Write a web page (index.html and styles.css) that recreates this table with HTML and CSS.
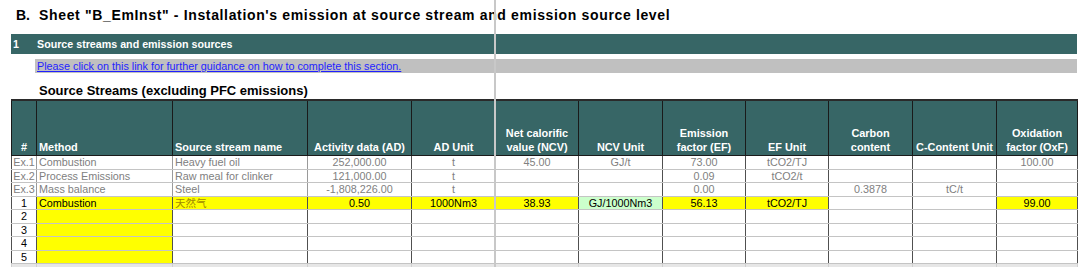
FILE: index.html
```html
<!DOCTYPE html>
<html>
<head>
<meta charset="utf-8">
<link rel="stylesheet" href="styles.css">
</head>
<body>
<div class="page">
  <h1 class="title"><span class="title-num">B.</span>Sheet "B_EmInst" - Installation's emission at source stream and emission source level</h1>
  <div class="section-bar"><span class="sec-num">1</span>Source streams and emission sources</div>
  <div class="guide-bar"><a class="guide-link" href="#">Please click on this link for further guidance on how to complete this section.</a></div>
  <h2 class="subtitle">Source Streams (excluding PFC emissions)</h2>
  <table class="grid">
    <colgroup>
      <col class="c-num"><col class="c-method"><col class="c-name"><col class="c-ad"><col class="c-w84"><col class="c-w83"><col class="c-w84"><col class="c-w83"><col class="c-w83"><col class="c-w84"><col class="c-w84"><col class="c-w81">
    </colgroup>
    <thead>
      <tr>
        <th class="ctr">#</th>
        <th class="lft">Method</th>
        <th class="lft">Source stream name</th>
        <th>Activity data (AD)</th>
        <th>AD Unit</th>
        <th>Net calorific<br>value (NCV)</th>
        <th>NCV Unit</th>
        <th>Emission<br>factor (EF)</th>
        <th>EF Unit</th>
        <th>Carbon<br>content</th>
        <th>C-Content Unit</th>
        <th>Oxidation<br>factor (OxF)</th>
      </tr>
    </thead>
    <tbody>
      <tr class="ex">
        <td class="idx">Ex.1</td><td class="lft">Combustion</td><td class="lft">Heavy fuel oil</td><td>252,000.00</td><td>t</td><td>45.00</td><td>GJ/t</td><td>73.00</td><td>tCO2/TJ</td><td></td><td></td><td>100.00</td>
      </tr>
      <tr class="ex">
        <td class="idx">Ex.2</td><td class="lft">Process Emissions</td><td class="lft">Raw meal for clinker</td><td>121,000.00</td><td>t</td><td></td><td></td><td>0.09</td><td>tCO2/t</td><td></td><td></td><td></td>
      </tr>
      <tr class="ex">
        <td class="idx">Ex.3</td><td class="lft">Mass balance</td><td class="lft">Steel</td><td>-1,808,226.00</td><td>t</td><td></td><td></td><td>0.00</td><td></td><td>0.3878</td><td>tC/t</td><td></td>
      </tr>
      <tr>
        <td class="idx">1</td><td class="lft yel">Combustion</td><td class="lft yel cjk">天然气</td><td class="yel">0.50</td><td class="yel">1000Nm3</td><td class="yel">38.93</td><td class="grn">GJ/1000Nm3</td><td class="yel">56.13</td><td class="yel">tCO2/TJ</td><td></td><td></td><td class="yel">99.00</td>
      </tr>
      <tr><td class="idx">2</td><td class="yel"></td><td></td><td></td><td></td><td></td><td></td><td></td><td></td><td></td><td></td><td></td></tr>
      <tr><td class="idx">3</td><td class="yel"></td><td></td><td></td><td></td><td></td><td></td><td></td><td></td><td></td><td></td><td></td></tr>
      <tr><td class="idx">4</td><td class="yel"></td><td></td><td></td><td></td><td></td><td></td><td></td><td></td><td></td><td></td><td></td></tr>
      <tr><td class="idx">5</td><td class="yel"></td><td></td><td></td><td></td><td></td><td></td><td></td><td></td><td></td><td></td><td></td></tr>
      <tr class="tail"><td></td><td></td><td></td><td></td><td></td><td></td><td></td><td></td><td></td><td></td><td></td><td></td></tr>
    </tbody>
  </table>
  <div class="freeze-line"></div>
</div>
</body>
</html>
```

FILE: styles.css
```css
html, body {
  margin: 0;
  padding: 0;
  background: #ffffff;
  overflow: hidden;
}
.page {
  position: relative;
  width: 1080px;
  height: 267px;
  overflow: hidden;
  font-family: "Liberation Sans", Arial, sans-serif;
  color: #000;
}
.title {
  margin: 0;
  padding: 7px 0 0 16px;
  height: 34px;
  box-sizing: border-box;
  font-size: 14px;
  letter-spacing: 0.65px;
  line-height: 16px;
  font-weight: bold;
  white-space: nowrap;
}
.title-num {
  display: inline-block;
  width: 23px;
  letter-spacing: 0;
}
.section-bar {
  margin-left: 11px;
  width: 1066px;
  height: 20px;
  background: #376666;
  color: #ffffff;
  font-weight: bold;
  font-size: 10.7px;
  line-height: 20px;
  white-space: nowrap;
}
.sec-num {
  display: inline-block;
  width: 26px;
  padding-left: 2px;
  box-sizing: border-box;
}
.guide-bar {
  margin-top: 5px;
  margin-left: 35px;
  width: 1042px;
  height: 14px;
  background: #c0c0c0;
  font-size: 10.8px;
  line-height: 14px;
  padding-left: 2px;
  box-sizing: border-box;
  white-space: nowrap;
}
.guide-link {
  color: #1f1fff;
  text-decoration: underline;
}
.subtitle {
  margin: 0;
  padding: 10px 0 0 39px;
  height: 26px;
  box-sizing: border-box;
  font-size: 13px;
  line-height: 16px;
  font-weight: bold;
  white-space: nowrap;
}
.grid {
  margin-left: 11px;
  width: 1066px;
  table-layout: fixed;
  border-collapse: collapse;
  font-size: 10.8px;
}
.c-num { width: 25px; }
.c-method { width: 136px; }
.c-name { width: 135px; }
.c-ad { width: 104px; }
.c-w84 { width: 84px; }
.c-w83 { width: 83px; }
.c-w81 { width: 81px; }

.grid thead th {
  height: 53px;
  background: #376666;
  color: #ffffff;
  font-size: 10.9px;
  line-height: 14px;
  font-weight: bold;
  text-align: center;
  vertical-align: bottom;
  padding: 0 1px 1px 1px;
  border-top: 2px solid #2a2a2a;
  border-left: 1px solid #1a1a1a;
  border-right: 1px solid #1a1a1a;
  border-bottom: 1px solid #1a1a1a;
  white-space: nowrap;
}
.grid thead th.lft {
  text-align: left;
  padding-left: 2px;
}
.grid tbody td {
  height: 12.5px;
  padding: 0 2px;
  line-height: 12px;
  text-align: center;
  white-space: nowrap;
  overflow: hidden;
  border-left: 1px solid #505050;
  border-right: 1px solid #505050;
  border-bottom: 1px solid #c4c4c4;
  color: #000;
}
.grid tbody td.lft {
  text-align: left;
}
.grid tbody td.idx {
  text-align: center;
  padding: 0;
}
.grid tbody tr.ex td {
  color: #808080;
}
.grid tbody tr.ex td:nth-child(-n+3) {
  border-left-color: #9a9a9a;
  border-right-color: #9a9a9a;
}
.grid tbody tr.ex td.idx {
  border-left-color: #505050;
}
.grid tbody td.yel {
  background: #ffff00;
}
.grid tbody td.grn {
  background: #ccffcc;
}
.grid tbody td.cjk {
  font-family: "Noto Sans CJK SC", "Liberation Serif", serif;
  color: #a08a00;
  font-size: 10.5px;
}
.grid tbody tr.tail td {
  background: #e6e6e6;
  border-color: #d0d0d0;
}
.freeze-line {
  position: absolute;
  left: 494px;
  top: 0;
  width: 2px;
  height: 267px;
  background: #c8c8c8;
}
```
